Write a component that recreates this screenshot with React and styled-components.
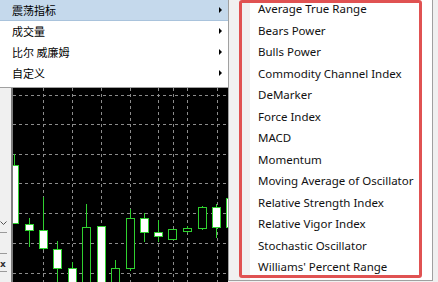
import React from 'react';
import styled, { createGlobalStyle } from 'styled-components';

const GlobalStyle = createGlobalStyle`
    html,
    body {
        margin: 0;
        padding: 0;
        background: #f0f0f0;
    }
    body {
        width: 438px;
        height: 282px;
        overflow: hidden;
        font-family: 'Noto Sans', 'Noto Sans CJK SC', sans-serif;
    }
`;

const menuItems = [
    { id: 1, text: '震荡指标', active: true },
    { id: 2, text: '成交量' },
    { id: 3, text: '比尔 威廉姆' },
    { id: 4, text: '自定义' },
];

const indicators = [
    'Average True Range',
    'Bears Power',
    'Bulls Power',
    'Commodity Channel Index',
    'DeMarker',
    'Force Index',
    'MACD',
    'Momentum',
    'Moving Average of Oscillator',
    'Relative Strength Index',
    'Relative Vigor Index',
    'Stochastic Oscillator',
    "Williams' Percent Range",
];

// x = centre, hi/lo = wick, top/bot = body, fill = white body
const candles = [
    { x: 1.5, hi: 66, lo: 135, top: 77, bot: 135, fill: true },
    { x: 16, hi: 130, lo: 159, top: 136, bot: 142, fill: true },
    { x: 30.5, hi: 109, lo: 162, top: 142, bot: 160, fill: true },
    { x: 44.5, hi: 153, lo: 200, top: 161, bot: 180, fill: true },
    { x: 59.5, hi: 174, lo: 200, top: 180, bot: 200, fill: true },
    { x: 73.5, hi: 116, lo: 200, top: 139, bot: 200, fill: false },
    { x: 88.5, hi: 138, lo: 200, top: 138, bot: 200, fill: true },
    { x: 102.5, hi: 172, lo: 200, top: 180, bot: 200, fill: false },
    { x: 117, hi: 121, lo: 183, top: 130, bot: 180, fill: false },
    { x: 131.5, hi: 125, lo: 154, top: 130, bot: 144, fill: true },
    { x: 145.5, hi: 132, lo: 154, top: 144, bot: 148, fill: true },
    { x: 159.5, hi: 141, lo: 151, top: 141, bot: 151, fill: false },
    { x: 174.5, hi: 138, lo: 145, top: 140, bot: 143, fill: false },
    { x: 189, hi: 118, lo: 142, top: 119, bot: 140, fill: false },
    { x: 203, hi: 116, lo: 150, top: 119, bot: 139, fill: true },
    { x: 217.5, hi: 105, lo: 139, top: 110, bot: 139, fill: true },
];

const gridX = [30, 59, 88, 117, 145, 160, 174, 204];
const gridY = [7, 36, 66, 95, 125, 155, 185];

function CandleChart() {
    return (
        <svg width="215" height="194" viewBox="0 0 215 194">
            {gridX.map((x) => (
                <line key={'x' + x} x1={x + 0.5} y1="0" x2={x + 0.5} y2="194" stroke="#8c8c8c" strokeDasharray="3 3" />
            ))}
            {gridY.map((y) => (
                <line key={'y' + y} x1="0" y1={y + 0.5} x2="215" y2={y + 0.5} stroke="#8c8c8c" strokeDasharray="3 3" />
            ))}
            {candles.map((c, i) => {
                const wx = Math.floor(c.x) + 0.5;
                return (
                    <g key={i}>
                        <line x1={wx} y1={c.hi} x2={wx} y2={c.lo} stroke="#2fd12f" />
                        <rect
                            x={Math.floor(c.x) - 4 + 0.5}
                            y={c.top + 0.5}
                            width="8"
                            height={Math.max(c.bot - c.top, 1)}
                            fill={c.fill ? '#ffffff' : '#000000'}
                            stroke="#2fd12f"
                        />
                    </g>
                );
            })}
        </svg>
    );
}

function App() {
    return (
        <>
            <GlobalStyle />
            <Screen>
                <LeftColumn>
                    <Menu>
                        {menuItems.map((item) => (
                            <MenuItem key={item.id} $active={item.active}>
                                <span>{item.text}</span>
                                <Arrow />
                            </MenuItem>
                        ))}
                    </Menu>
                    <Workspace>
                        <SidePanel>
                            <svg width="7" height="5" viewBox="0 0 7 5">
                                <path d="M0.5 0.5 L3.5 3.5 L6.5 0.5" fill="none" stroke="#555" />
                            </svg>
                            <Rule $gap={6} />
                            <Rule $gap={20} />
                            <Close>x</Close>
                            <Rule $gap={1} />
                        </SidePanel>
                        <Chart>
                            <CandleChart />
                        </Chart>
                    </Workspace>
                </LeftColumn>
                <SubMenu>
                    <SubList>
                        {indicators.map((name) => (
                            <SubItem key={name}>{name}</SubItem>
                        ))}
                    </SubList>
                    <Highlight />
                </SubMenu>
                <Filler />
            </Screen>
        </>
    );
}

const Screen = styled.div`
    display: flex;
    width: 438px;
    height: 282px;
    overflow: hidden;
    background: #f0f0f0;
`;
const LeftColumn = styled.div`
    display: flex;
    flex-direction: column;
    flex-shrink: 0;
    width: 228px;
`;
const Menu = styled.ul`
    margin: 0;
    padding: 0 0 3px;
    list-style: none;
    background: #ffffff;
    border-bottom: 1px solid #a0a0a0;
    font-family: 'Noto Sans CJK SC', sans-serif;
    font-size: 11px;
    color: #000;
`;
const MenuItem = styled.li`
    display: flex;
    align-items: center;
    justify-content: space-between;
    box-sizing: border-box;
    height: 21px;
    padding: 0 6px 0 12px;
    background: ${(p) => (p.$active ? '#c5d9ec' : 'transparent')};
    border-bottom: 1px solid ${(p) => (p.$active ? '#a9c3dc' : 'transparent')};
`;
const Arrow = styled.i`
    width: 0;
    height: 0;
    border-left: 3px solid #000;
    border-top: 3px solid transparent;
    border-bottom: 3px solid transparent;
`;
const Workspace = styled.div`
    display: flex;
    flex: 1;
    min-height: 0;
`;
const SidePanel = styled.div`
    display: flex;
    flex-direction: column;
    box-sizing: border-box;
    width: 13px;
    padding-top: 133px;
    background: #f0f0f0;
    border-right: 2px solid #7d7d7d;
`;
const Rule = styled.div`
    width: 7px;
    margin-top: ${(p) => p.$gap}px;
    border-top: 1px solid #9a9a9a;
`;
const Close = styled.div`
    margin-top: 5px;
    font-family: 'DejaVu Sans', sans-serif;
    font-size: 9px;
    font-weight: bold;
    line-height: 11px;
    color: #333;
`;
const Chart = styled.div`
    flex: 1;
    overflow: hidden;
    background: #000000;
    svg {
        display: block;
    }
`;
const SubMenu = styled.div`
    position: relative;
    flex-shrink: 0;
    box-sizing: border-box;
    width: 205px;
    height: 281px;
    overflow: hidden;
    border: 1px solid #a0a0a0;
    border-top: none;
    background: linear-gradient(to right, #f1f1f1 0 21px, #ffffff 21px);
`;
const SubList = styled.ul`
    margin: -2px 0 0;
    padding: 0;
    list-style: none;
`;
const SubItem = styled.li`
    display: flex;
    align-items: center;
    height: 21.5px;
    padding-left: 29px;
    font-size: 11.5px;
    color: #111;
    white-space: nowrap;
`;
const Highlight = styled.div`
    position: absolute;
    left: 10px;
    top: 0;
    box-sizing: border-box;
    width: 183px;
    height: 278px;
    border: 3.5px solid #e05252;
    border-radius: 3px;
    pointer-events: none;
`;
const Filler = styled.div`
    flex: 1;
    background: #f0f0f0;
`;

export default App;
